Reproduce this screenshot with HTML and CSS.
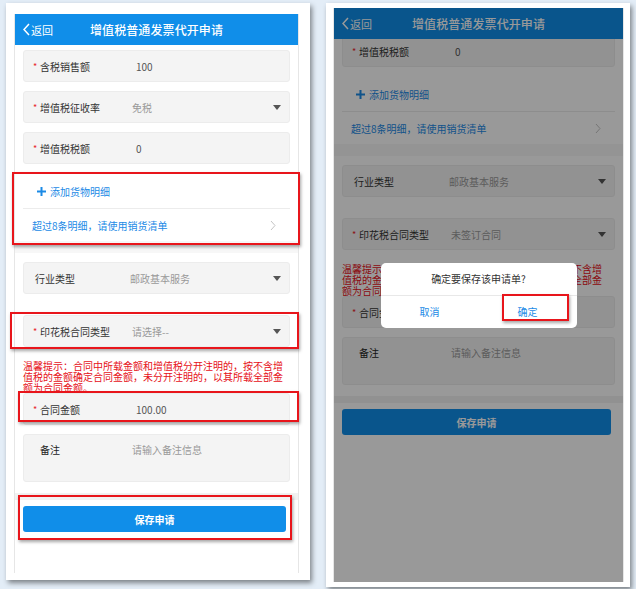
FILE: index.html
```html
<!DOCTYPE html>
<html lang="zh-CN">
<head>
    <meta charset="UTF-8">
    <meta name="viewport" content="width=device-width, initial-scale=1.0">
    <title>增值税普通发票代开申请</title>
    <link rel="stylesheet" href="styles.css">
</head>
<body>
    <!-- left shot: filled form -->
    <div class="shot shot-left">
        <div class="screen">
            <div class="topbar">
                <a class="back" href="#">
                    <svg width="7" height="13" viewBox="0 0 7 13"><polyline points="6,1 1,6.5 6,12" fill="none" stroke="#fff" stroke-width="1.5"/></svg>
                    <span>返回</span>
                </a>
                <h1>增值税普通发票代开申请</h1>
                <span></span>
            </div>
            <div class="viewport">
                <div class="page">
                    <div class="group">
                        <div class="field"><span class="req">*</span><span class="label">含税销售额</span><span class="value">100</span></div>
                        <div class="field"><span class="req">*</span><span class="label">增值税征收率</span><span class="value pick">免税</span><span class="arrow"></span></div>
                        <div class="field"><span class="req">*</span><span class="label">增值税税额</span><span class="value">0</span></div>
                    </div>
                    <div class="goods">
                        <div class="add-row">
                            <svg width="9" height="9" viewBox="0 0 9 9"><path d="M4.5 0v9M0 4.5h9" stroke="#1b8ae6" stroke-width="2"/></svg>
                            <span>添加货物明细</span>
                        </div>
                        <div class="link-row">
                            <span>超过8条明细，请使用销货清单</span>
                            <svg width="6" height="11" viewBox="0 0 6 11"><polyline points="1,1 5,5.5 1,10" fill="none" stroke="#c4c4c4" stroke-width="1"/></svg>
                        </div>
                    </div>
                    <div class="band"></div>
                    <div class="group group-second">
                        <div class="field"><span class="label plain">行业类型</span><span class="value pick">邮政基本服务</span><span class="arrow"></span></div>
                        <div class="field field-gap"><span class="req">*</span><span class="label">印花税合同类型</span><span class="value pick">请选择--</span><span class="arrow"></span></div>
                        <p class="tip">温馨提示：合同中所载金额和增值税分开注明的，按不含增值税的金额确定合同金额，未分开注明的，以其所载全部金额为合同金额。</p>
                        <div class="field field-tight"><span class="req">*</span><span class="label">合同金额</span><span class="value">100.00</span></div>
                        <div class="field field-memo"><span class="req blank">*</span><span class="label dark">备注</span><span class="value pick">请输入备注信息</span></div>
                    </div>
                    <div class="band band-thin"></div>
                    <div class="footer">
                        <button class="save-btn">保存申请</button>
                    </div>
                </div>
            </div>
        </div>
        <div class="mark mark-goods"></div>
        <div class="mark mark-type"></div>
        <div class="mark mark-amount"></div>
        <div class="mark mark-save"></div>
    </div>

    <!-- right shot: confirm dialog -->
    <div class="shot shot-right">
        <div class="screen">
            <div class="topbar">
                <a class="back" href="#">
                    <svg width="7" height="13" viewBox="0 0 7 13"><polyline points="6,1 1,6.5 6,12" fill="none" stroke="#fff" stroke-width="1.5"/></svg>
                    <span>返回</span>
                </a>
                <h1>增值税普通发票代开申请</h1>
                <span></span>
            </div>
            <div class="viewport">
                <div class="page scrolled">
                    <div class="group">
                        <div class="field"><span class="req">*</span><span class="label">含税销售额</span><span class="value">100</span></div>
                        <div class="field"><span class="req">*</span><span class="label">增值税征收率</span><span class="value pick">免税</span><span class="arrow"></span></div>
                        <div class="field"><span class="req">*</span><span class="label">增值税税额</span><span class="value">0</span></div>
                    </div>
                    <div class="goods">
                        <div class="add-row">
                            <svg width="9" height="9" viewBox="0 0 9 9"><path d="M4.5 0v9M0 4.5h9" stroke="#1b8ae6" stroke-width="2"/></svg>
                            <span>添加货物明细</span>
                        </div>
                        <div class="link-row">
                            <span>超过8条明细，请使用销货清单</span>
                            <svg width="6" height="11" viewBox="0 0 6 11"><polyline points="1,1 5,5.5 1,10" fill="none" stroke="#c4c4c4" stroke-width="1"/></svg>
                        </div>
                    </div>
                    <div class="band"></div>
                    <div class="group group-second">
                        <div class="field"><span class="label plain">行业类型</span><span class="value pick">邮政基本服务</span><span class="arrow"></span></div>
                        <div class="field field-gap"><span class="req">*</span><span class="label">印花税合同类型</span><span class="value pick">未签订合同</span><span class="arrow"></span></div>
                        <p class="tip">温馨提示：合同中所载金额和增值税分开注明的，按不含增值税的金额确定合同金额，未分开注明的，以其所载全部金额为合同金额。</p>
                        <div class="field field-tight"><span class="req">*</span><span class="label">合同金额</span><span class="value">100.00</span></div>
                        <div class="field field-memo"><span class="req blank">*</span><span class="label dark">备注</span><span class="value pick">请输入备注信息</span></div>
                    </div>
                    <div class="band band-thin"></div>
                    <div class="footer">
                        <button class="save-btn">保存申请</button>
                    </div>
                </div>
            </div>
            <div class="mask">
                <div class="dialog">
                    <div class="dialog-title">确定要保存该申请单?</div>
                    <div class="dialog-btns">
                        <a href="#">取消</a>
                        <a href="#">确定</a>
                    </div>
                </div>
            </div>
        </div>
        <div class="mark mark-ok"></div>
    </div>
</body>
</html>
```

FILE: styles.css
```css
body {
    margin: 0;
    padding: 3px 0 0 6px;
    height: 589px;
    box-sizing: border-box;
    background: #e3edf7;
    font-family: "Noto Sans CJK SC", "Noto Sans", sans-serif;
    display: flex;
    align-items: flex-start;
    gap: 16px;
    overflow: hidden;
}

.shot {
    position: relative;
    width: 304px;
    background: #fff;
    box-sizing: border-box;
    box-shadow: 2px 3px 5px rgba(0, 0, 0, 0.45);
}

.shot-left {
    height: 577px;
    padding: 11px 11px 7px 8px;
}

.shot-right {
    height: 584px;
    padding: 5px 6px 5px 7px;
}

.screen {
    position: relative;
    height: 100%;
    display: flex;
    flex-direction: column;
    overflow: hidden;
    background: #fff;
    border-left: 1px solid #e6e6e6;
    border-right: 1px solid #e6e6e6;
    box-sizing: border-box;
}

.topbar {
    height: 31px;
    flex-shrink: 0;
    background: #108ee9;
    display: grid;
    grid-template-columns: 1fr auto 1fr;
    align-items: center;
    color: #fff;
}

.back {
    display: flex;
    align-items: center;
    gap: 1px;
    padding-left: 8px;
    color: #fff;
    text-decoration: none;
    font-size: 11px;
}

.topbar h1 {
    margin: 0;
    font-size: 12px;
    font-weight: 500;
    letter-spacing: 0.1px;
}

.viewport {
    flex: 1;
    overflow: hidden;
}

.page.scrolled {
    margin-top: -91px;
}

.group {
    padding: 5px 8px 0 8px;
    display: flex;
    flex-direction: column;
    gap: 9px;
}

.group-second {
    padding-top: 9px;
    gap: 9px;
}

.field {
    height: 32px;
    flex-shrink: 0;
    box-sizing: border-box;
    display: flex;
    align-items: center;
    padding: 0 8px 0 9px;
    background: #f4f4f4;
    border: 1px solid #ececec;
    border-radius: 3px;
    font-size: 10px;
}

.field-gap {
    margin-top: 12px;
}

.field-tight {
    margin-top: -9px;
}

.field-memo {
    height: 48px;
    align-items: flex-start;
    padding-top: 7px;
}

.req {
    width: 7px;
    color: #e8262b;
    font-size: 9px;
}

.req.blank {
    visibility: hidden;
}

.label {
    width: 96px;
    color: #333;
}

.label.plain {
    width: 99px;
    padding-left: 2px;
}

.label.dark {
    color: #222;
}

.value {
    flex: 1;
    color: #555;
}

.value.pick {
    margin-left: -4px;
    color: #999;
}

.arrow {
    width: 0;
    height: 0;
    border-left: 4px solid transparent;
    border-right: 4px solid transparent;
    border-top: 5px solid #555;
}

.goods {
    margin: 10px 8px 0 8px;
}

.add-row {
    height: 34px;
    display: flex;
    align-items: center;
    gap: 4px;
    padding-left: 14px;
    border-bottom: 1px solid #ececec;
    color: #1b8ae6;
    font-size: 10px;
}

.link-row {
    height: 32px;
    display: flex;
    align-items: center;
    justify-content: space-between;
    padding: 0 14px 0 9px;
    color: #1b8ae6;
    font-size: 10px;
}

.band {
    height: 12px;
    background: #f7f7f7;
}

.band-thin {
    height: 7px;
    margin-top: 11px;
    background: #f2f2f2;
}

.tip {
    max-width: 266px;
    margin: 4px 0 0 0;
    color: #e60f18;
    font-size: 10px;
    line-height: 11px;
}

.footer {
    padding: 6px 12px 0 8px;
}

.save-btn {
    display: block;
    width: 100%;
    height: 26px;
    border: none;
    border-radius: 3px;
    background: #108ee9;
    color: #fff;
    font-family: inherit;
    font-size: 10px;
    font-weight: bold;
    cursor: pointer;
}

.mask {
    position: absolute;
    inset: 0;
    background: rgba(0, 0, 0, 0.4);
    display: flex;
    align-items: center;
    justify-content: center;
}

.dialog {
    width: 196px;
    background: #fff;
    border-radius: 5px;
    overflow: hidden;
}

.dialog-title {
    height: 32px;
    line-height: 32px;
    text-align: center;
    color: #333;
    font-size: 10px;
    border-bottom: 1px solid #e8e8e8;
}

.dialog-btns {
    height: 32px;
    display: grid;
    grid-template-columns: 1fr 1fr;
    align-items: center;
    text-align: center;
}

.dialog-btns a {
    color: #1b8ae6;
    text-decoration: none;
    font-size: 10px;
}

/* red annotation boxes */
.mark {
    position: absolute;
    border: 2px solid #e8151b;
    box-shadow: 1px 2px 3px rgba(0, 0, 0, 0.35);
    box-sizing: border-box;
}

.mark-goods {
    left: 6px;
    top: 169px;
    width: 288px;
    height: 73px;
}

.mark-type {
    left: 4px;
    top: 309px;
    width: 289px;
    height: 37px;
}

.mark-amount {
    left: 12px;
    top: 388px;
    width: 281px;
    height: 31px;
}

.mark-save {
    left: 12px;
    top: 492px;
    width: 274px;
    height: 45px;
}

.mark-ok {
    left: 176px;
    top: 291px;
    width: 67px;
    height: 27px;
}
```
